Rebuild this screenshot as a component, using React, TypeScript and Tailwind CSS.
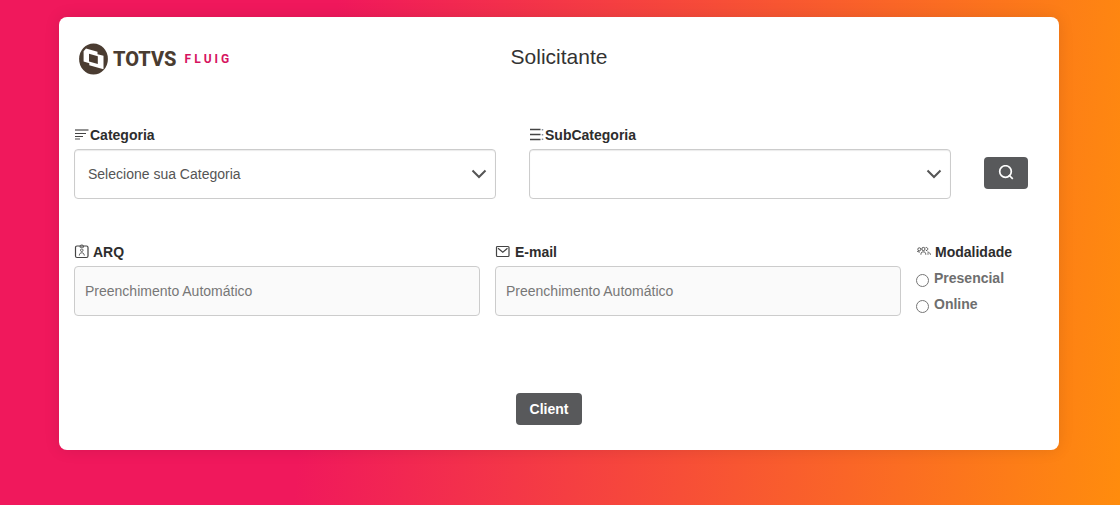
import React from "react";

const labelClass = "flex h-5 items-center text-sm font-bold text-[#2d2d2d]";
const selectClass =
  "h-[50px] w-full appearance-none rounded border border-[#cccccc] bg-white pl-[13px] pr-10 text-sm text-[#555555] shadow-[inset_0_1px_1px_rgba(0,0,0,0.08)]";
const inputClass =
  "h-[50px] w-full rounded border border-[#cccccc] bg-[#fafafa] px-2.5 text-sm text-[#555555] placeholder:text-[#777777]";

function Logo() {
  return (
    <div className="flex items-center pt-0.5 text-[#4a3c31]" aria-label="TOTVS Fluig">
      <svg className="size-8" viewBox="0 0 32 32" aria-hidden="true">
        <ellipse cx="14.5" cy="16" rx="14.4" ry="15.6" fill="currentColor" />
        <path d="M7 5.5 18.5 8.8V11.2L24.5 12.8V26.2L10.3 22.3V20.2L4.6 18.6V8.2Z" fill="#fff" />
        <path d="M10 10.8 18.8 13.3V21L10 18.5Z" fill="currentColor" />
      </svg>
      <span className="ml-0.5 font-['Roboto',sans-serif] text-xl font-extrabold">TOTVS</span>
      <span className="ml-2 flex gap-[3px] font-['Roboto',sans-serif] text-xs font-bold text-[#d6145f]">
        <span>F</span><span>L</span><span>U</span><span>I</span><span>G</span>
      </span>
    </div>
  );
}

function LinesIcon() {
  return (
    <svg className="h-4 w-4 shrink-0" viewBox="0 0 16 16" fill="none" aria-hidden="true">
      <path d="M1 3H14.5" stroke="#929292" strokeWidth="2" />
      <path d="M1 6.5H12M1 9.5H9" stroke="#444" strokeWidth="1.2" />
      <path d="M1 12H6" stroke="#929292" strokeWidth="1.6" />
    </svg>
  );
}

function ListIcon() {
  return (
    <svg className="h-4 w-4 shrink-0" viewBox="0 0 16 16" fill="none" aria-hidden="true">
      <path d="M1 2.5H11.5M1 7.5H11.5M1 12.5H11.5" stroke="#444" strokeWidth="1.4" />
      <path d="M13.5 2V3.5M13.5 7V8.5M13.5 11.5V13" stroke="#8b929c" strokeWidth="1.5" />
    </svg>
  );
}

function BadgeIcon() {
  return (
    <svg className="h-4 w-4 shrink-0" viewBox="0 0 16 16" fill="none" stroke="#444" aria-hidden="true">
      <rect x="1.5" y="2" width="12.5" height="11.5" rx="1.5" strokeWidth="1.2" />
      <path d="M6 2C6 .6 9.5 .6 9.5 2V3.3H6Z" strokeWidth=".8" />
      <circle cx="7.8" cy="6.2" r="1.3" strokeWidth=".8" />
      <path d="M5.3 11.5C5.5 9.4 6.5 8.8 7.8 8.8S10 9.4 10.3 11.5" strokeWidth=".9" />
    </svg>
  );
}

function MailIcon() {
  return (
    <svg className="h-4 w-4 shrink-0" viewBox="0 0 16 16" fill="none" stroke="#444" strokeWidth="1.2" aria-hidden="true">
      <rect x="1.5" y="2.5" width="12.5" height="10" rx="1" />
      <path d="M3 4.2 7.8 8.2 12.5 4.2" />
    </svg>
  );
}

function PeopleIcon() {
  return (
    <svg className="h-4 w-4 shrink-0" viewBox="0 0 16 16" fill="none" stroke="#444" strokeWidth=".9" aria-hidden="true">
      <circle cx="3.3" cy="5.3" r="1.5" />
      <circle cx="7.4" cy="5" r="1.6" />
      <path d="M9.7 3.5C12.3 3 12.5 6.8 9.9 6.6M1.2 7.4 3.8 8.2M4.9 10.7C5 8.2 5.8 7.9 7.4 7.9S9.6 8.4 9.8 10.7M11.4 8C13 8.2 14.2 9 14.5 10.7M12 9.2V10.7" />
    </svg>
  );
}

function SelectBox({ id, children }: { id: string; children?: React.ReactNode }) {
  return (
    <div className="grid items-center">
      <select id={id} className={`${selectClass} col-start-1 row-start-1`}>
        {children}
      </select>
      <svg
        className="pointer-events-none col-start-1 row-start-1 mr-[9px] h-4 w-4 justify-self-end"
        viewBox="0 0 16 16"
        fill="none"
        stroke="#555"
        strokeWidth="2"
        aria-hidden="true"
      >
        <path d="M1.5 4.5 8 11 14.5 4.5" />
      </svg>
    </div>
  );
}

export default function App() {
  return (
    <main className="min-h-screen bg-[linear-gradient(95deg,#f0185c_29%,#ff8c0d_100%)] pt-[17px] pr-[61px] pb-[55px] pl-[59px] font-['Liberation_Sans',Arial,sans-serif]">
      <form
        className="rounded-lg bg-white px-[15px] pt-6 pb-[25px] shadow-[0_0_16px_rgba(0,0,0,0.1)]"
        onSubmit={(e) => e.preventDefault()}
      >
        <header className="grid grid-cols-3 items-start px-[5px]">
          <Logo />
          <h1 className="text-center text-[21px] leading-8 text-[#333333]">Solicitante</h1>
        </header>

        <div className="mt-[50px] grid grid-cols-[1fr_1fr_44px] gap-x-[33px] pr-4">
          <div>
            <label htmlFor="categoria" className={`${labelClass} mb-1`}>
              <LinesIcon />
              Categoria
            </label>
            <SelectBox id="categoria">
              <option>Selecione sua Categoria</option>
            </SelectBox>
          </div>
          <div>
            <label htmlFor="subcategoria" className={`${labelClass} mb-1`}>
              <ListIcon />
              SubCategoria
            </label>
            <SelectBox id="subcategoria" />
          </div>
          <button
            type="button"
            aria-label="Buscar"
            className="mb-2.5 flex h-8 items-center justify-center self-end rounded bg-[#58595b] text-white"
          >
            <svg className="h-4 w-4" viewBox="0 0 16 16" fill="none" stroke="currentColor" strokeWidth="1.7" aria-hidden="true">
              <circle cx="7.5" cy="6.5" r="5.8" />
              <path d="M10.8 10 14.8 13.8" />
            </svg>
          </button>
        </div>

        <div className="mt-[43px] grid grid-cols-[1fr_1fr_128px] gap-x-[15px]">
          <div>
            <label htmlFor="arq" className={`${labelClass} mb-1 gap-[3px]`}>
              <BadgeIcon />
              ARQ
            </label>
            <input id="arq" type="text" readOnly placeholder="Preenchimento Automático" className={inputClass} />
          </div>
          <div>
            <label htmlFor="email" className={`${labelClass} mb-1 gap-1`}>
              <MailIcon />
              E-mail
            </label>
            <input id="email" type="email" readOnly placeholder="Preenchimento Automático" className={inputClass} />
          </div>
          <fieldset>
            <legend className={`${labelClass} mb-1 gap-[3px]`}>
              <PeopleIcon />
              Modalidade
            </legend>
            {["Presencial", "Online"].map((name) => (
              <label key={name} className="flex h-[26px] items-start gap-[5px] text-sm leading-6 font-bold text-[#6e6e6e]">
                <input type="radio" name="modalidade" value={name} className="mt-2 size-[13px]" />
                {name}
              </label>
            ))}
          </fieldset>
        </div>

        <div className="mt-[75px] flex justify-center pr-5">
          <button type="submit" className="h-8 rounded bg-[#58595b] px-3.5 text-sm font-bold text-white">
            Client
          </button>
        </div>
      </form>
    </main>
  );
}
